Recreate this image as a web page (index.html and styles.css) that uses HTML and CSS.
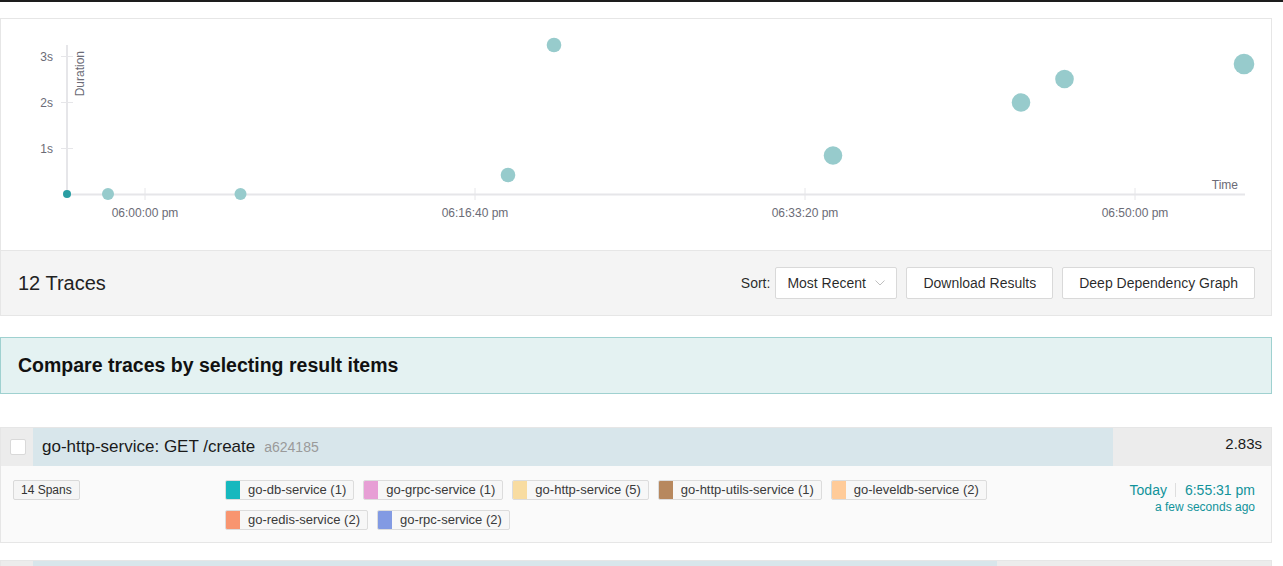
FILE: index.html
```html
<!DOCTYPE html>
<html lang="en">
<head>
<meta charset="utf-8">
<title>Search Results</title>
<link rel="stylesheet" href="styles.css">
</head>
<body>
<div class="topbar"></div>
<main class="page">
  <section class="chart-box">
    <svg class="chart" width="1270" height="231" viewBox="1 19 1270 231" xmlns="http://www.w3.org/2000/svg">
      <g class="axis">
        <line x1="67" y1="45" x2="67" y2="195"/>
        <line x1="66" y1="194.5" x2="1245" y2="194.5"/>
        <line class="tick" x1="61" y1="56.5" x2="73" y2="56.5"/>
        <line class="tick" x1="61" y1="102.5" x2="73" y2="102.5"/>
        <line class="tick" x1="61" y1="148.5" x2="73" y2="148.5"/>
        <line class="tick" x1="145" y1="188" x2="145" y2="200"/>
        <line class="tick" x1="475" y1="188" x2="475" y2="200"/>
        <line class="tick" x1="805" y1="188" x2="805" y2="200"/>
        <line class="tick" x1="1135" y1="188" x2="1135" y2="200"/>
      </g>
      <g class="labels">
        <text x="53" y="60.5" text-anchor="end">3s</text>
        <text x="53" y="106.5" text-anchor="end">2s</text>
        <text x="53" y="152.5" text-anchor="end">1s</text>
        <text x="145" y="217" text-anchor="middle">06:00:00 pm</text>
        <text x="475" y="217" text-anchor="middle">06:16:40 pm</text>
        <text x="805" y="217" text-anchor="middle">06:33:20 pm</text>
        <text x="1135" y="217" text-anchor="middle">06:50:00 pm</text>
        <text x="1238" y="189" text-anchor="end">Time</text>
        <text transform="translate(84 51) rotate(-90)" text-anchor="end">Duration</text>
      </g>
      <g class="dots">
        <circle cx="108" cy="194" r="6"/>
        <circle cx="240.5" cy="194" r="6"/>
        <circle cx="508" cy="175" r="7.3"/>
        <circle cx="554" cy="45" r="7.3"/>
        <circle cx="833" cy="155.5" r="9.3"/>
        <circle cx="1021" cy="102.5" r="9.3"/>
        <circle cx="1064.5" cy="79" r="9.3"/>
        <circle cx="1244" cy="64" r="10.3"/>
        <circle class="dot-dark" cx="67" cy="194" r="4"/>
      </g>
    </svg>
  </section>

  <div class="results-header">
    <h2 class="count">12 Traces</h2>
    <div class="actions">
      <span class="sort-label">Sort:</span>
      <div class="select">
        <span>Most Recent</span>
        <svg class="chevron" width="10" height="6" viewBox="0 0 10 6"><path d="M0.5 0.5 L5 5 L9.5 0.5" fill="none" stroke="#bfbfbf" stroke-width="1"/></svg>
      </div>
      <button class="btn">Download Results</button>
      <button class="btn">Deep Dependency Graph</button>
    </div>
  </div>

  <div class="compare">Compare traces by selecting result items</div>

  <ul class="traces">
    <li class="trace">
      <div class="trace-head">
        <div class="check-cell"><span class="checkbox"></span></div>
        <div class="title-bar" style="width:1080px">
          <span class="title">go-http-service: GET /create</span>
          <span class="trace-id">a624185</span>
        </div>
        <div class="duration">2.83s</div>
      </div>
      <div class="trace-body">
        <div class="col-spans"><span class="span-count">14 Spans</span></div>
        <div class="services">
          <span class="svc"><i class="swatch" style="background:#17b8be"></i><span class="svc-name">go-db-service (1)</span></span>
          <span class="svc"><i class="swatch" style="background:#e79fd5"></i><span class="svc-name">go-grpc-service (1)</span></span>
          <span class="svc"><i class="swatch" style="background:#f8dca1"></i><span class="svc-name">go-http-service (5)</span></span>
          <span class="svc"><i class="swatch" style="background:#b7885e"></i><span class="svc-name">go-http-utils-service (1)</span></span>
          <span class="svc"><i class="swatch" style="background:#ffcb99"></i><span class="svc-name">go-leveldb-service (2)</span></span>
          <span class="svc"><i class="swatch" style="background:#f89570"></i><span class="svc-name">go-redis-service (2)</span></span>
          <span class="svc"><i class="swatch" style="background:#829ae3"></i><span class="svc-name">go-rpc-service (2)</span></span>
        </div>
        <div class="when">
          <div class="date"><span>Today</span><span class="sep"></span><span>6:55:31 pm</span></div>
          <div class="ago">a few seconds ago</div>
        </div>
      </div>
    </li>
    <li class="trace">
      <div class="trace-head">
        <div class="check-cell"><span class="checkbox"></span></div>
        <div class="title-bar" style="width:964px"></div>
        <div class="duration"></div>
      </div>
      <div class="trace-body"></div>
    </li>
  </ul>
</main>
</body>
</html>
```

FILE: styles.css
```css
* { box-sizing: border-box; }

html, body {
  margin: 0;
  padding: 0;
  background: #fff;
  font-family: "Liberation Sans", Arial, sans-serif;
  color: rgba(0, 0, 0, 0.85);
}

.topbar {
  height: 2px;
  background: #1d1d1d;
}

.page {
  width: 1272px;
}

.chart-box {
  margin-top: 16px;
  height: 233px;
  border: 1px solid #e6e6e6;
  background: #fff;
}

.chart {
  display: block;
}

.axis line {
  stroke: #e6e6e9;
  stroke-width: 2;
}

.axis .tick {
  stroke-width: 1;
}

.labels text {
  font-family: "Liberation Sans", Arial, sans-serif;
  font-size: 12px;
  fill: #6b6b76;
}

.dots circle {
  fill: #97cbcc;
}

.dots .dot-dark {
  fill: #2a9ea3;
}

.results-header {
  height: 65px;
  border: 1px solid #e6e6e6;
  border-top: 0;
  background: #f4f4f4;
  display: flex;
  align-items: center;
  justify-content: space-between;
  padding: 0 16px 0 17px;
}

.count {
  margin: 0;
  font-size: 20px;
  font-weight: 400;
  color: #222;
}

.actions {
  display: flex;
  align-items: center;
  gap: 9px;
}

.sort-label {
  font-size: 14px;
  margin-right: -4px;
  color: rgba(0, 0, 0, 0.85);
}

.select,
.btn {
  height: 32px;
  background: #fff;
  border: 1px solid #d9d9d9;
  border-radius: 2px;
  font-family: "Liberation Sans", Arial, sans-serif;
  font-size: 14px;
  color: rgba(0, 0, 0, 0.85);
}

.select {
  width: 122px;
  display: flex;
  align-items: center;
  justify-content: space-between;
  padding: 0 11px 0 11px;
}

.chevron {
  display: block;
}

.btn {
  padding: 0 16px;
  cursor: pointer;
}

.compare {
  margin-top: 21px;
  height: 57px;
  border: 1px solid #9fd1d0;
  background: #e4f2f2;
  display: flex;
  align-items: center;
  padding: 0 17px;
  font-size: 19.5px;
  font-weight: 700;
  color: #111;
}

.traces {
  list-style: none;
  margin: 33px 0 0;
  padding: 0;
}

.trace {
  border: 1px solid #e6e6e6;
  margin-bottom: 17px;
  background: #fafafa;
}

.trace-head {
  height: 38px;
  display: flex;
  background: #ececec;
}

.check-cell {
  width: 32px;
  display: flex;
  align-items: center;
  justify-content: center;
  padding-left: 1px;
}

.checkbox {
  width: 16px;
  height: 16px;
  background: #fff;
  border: 1px solid #d9d9d9;
  border-radius: 2px;
}

.title-bar {
  background: #d8e6eb;
  display: flex;
  align-items: center;
  padding-left: 9px;
  white-space: nowrap;
}

.title {
  font-size: 17px;
  color: #1a1a1a;
}

.trace-id {
  margin-left: 9px;
  font-size: 14px;
  color: #9a9a9a;
}

.duration {
  flex: 1;
  text-align: right;
  padding: 7px 9px 0 0;
  font-size: 15px;
  color: #1a1a1a;
}

.trace-body {
  display: grid;
  grid-template-columns: 212px 847px 1fr;
  padding: 14px 16px 12px 12px;
  min-height: 76px;
}

.span-count {
  display: inline-block;
  height: 20px;
  line-height: 18px;
  padding: 0 7px;
  border: 1px solid #d9d9d9;
  border-radius: 2px;
  background: #f5f5f5;
  font-size: 12px;
  color: #333;
}

.services {
  display: flex;
  flex-wrap: wrap;
  align-content: flex-start;
  gap: 10px 9px;
}

.svc {
  display: flex;
  height: 20px;
  border: 1px solid #dcdcdc;
  border-radius: 2px;
  background: #f7f7f7;
  overflow: hidden;
}

.swatch {
  display: block;
  width: 14px;
}

.svc-name {
  padding: 0 7px 0 8px;
  line-height: 18px;
  font-size: 13px;
  color: #3a3a3a;
  white-space: nowrap;
}

.when {
  text-align: right;
  color: #11939a;
}

.date {
  display: flex;
  justify-content: flex-end;
  align-items: center;
  height: 20px;
  font-size: 14px;
}

.sep {
  width: 1px;
  height: 14px;
  background: #dedede;
  margin: 0 9px 0 8px;
}

.ago {
  font-size: 12px;
  line-height: 14px;
}
```
